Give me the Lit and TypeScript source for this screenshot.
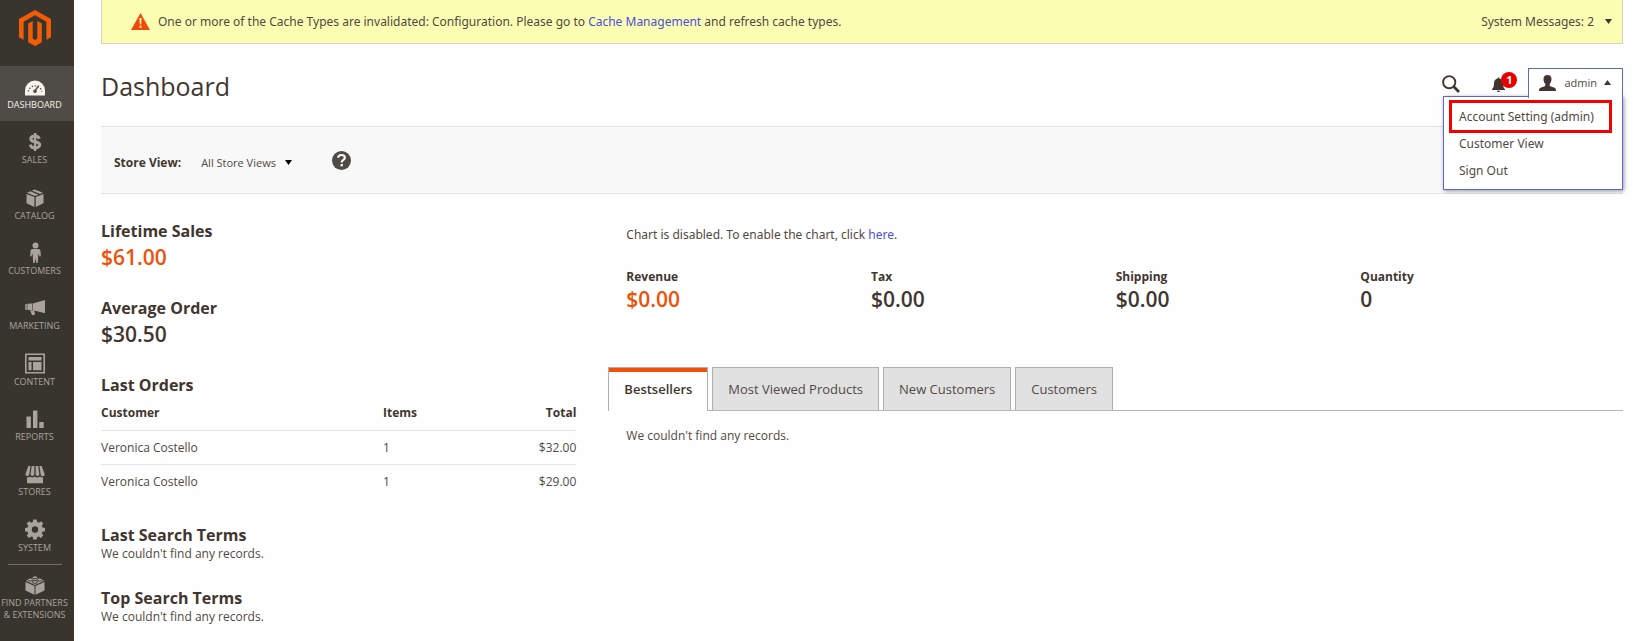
import { LitElement, html, css, svg } from "lit";
import { customElement, state } from "lit/decorators.js";
import { classMap } from "lit/directives/class-map.js";

const icons = {
  dashboard: svg`<path fill="currentColor" d="M0 18.500V13.500a10 10 0 0 1 20 0v5z"/><g stroke="#4f4b46" stroke-width="1.300" fill="none"><path stroke-dasharray="1.300 1.700" d="M3.300 14.500A6.800 6.800 0 0 1 16.700 14.500"/><path d="M13.700 8.600 9.800 14" stroke-width="1.500"/></g><circle cx="10" cy="14.200" r="1.800" fill="#4f4b46"/>`,
  sales: svg`<path fill="none" stroke="currentColor" stroke-width="3" d="M14.300 6.700C13.600 4.600 12 3.900 10 3.900 7.500 3.900 5.800 5.100 5.800 6.900c0 3.900 8.900 1.900 8.900 5.900 0 1.900-1.900 3.200-4.500 3.200-2.400 0-4.400-1-5-3.400"/><path fill="none" stroke="currentColor" stroke-width="2.400" d="M10.100 1v18"/>`,
  catalog: svg`<path fill="currentColor" d="M9.400 9v10L1.500 15.200V6zM10.700 9v10l7.800-3.800V6zM2 4.800l3.400-1.600 8 3.500-3.400 1.300zM6.900 2.500l2.600-1L18 4.800l-3 1.300z"/>`,
  customers: svg`<circle cx="10.500" cy="2.400" r="3" fill="currentColor"/><path fill="currentColor" d="M7.600 5.900h5.800c1.300 0 2 .8 2.100 2l.3 5.300-1.200.2-1.200-2.900-.6 9.600h-1.500l-.8-4.800-.8 4.800H8.200l-.6-9.600-1.200 2.900-1.200-.2.300-5.300c.1-1.200.8-2 2.100-2z"/>`,
  marketing: svg`<path fill="currentColor" d="M.3 6h1.500v6H.3zM2.400 5.800 7 5.500v6.800l-4.600-.5zM7.600 5.400 20 2v13.300L9.200 12.500l1 4-3 .8L5 12.500h2.600z"/>`,
  content: svg`<path fill="none" stroke="currentColor" stroke-width="1.600" d="M.8.300h18.400v18.400H.8z"/><path fill="currentColor" d="M3.500 3h13v3.500h-13zM3.500 8h3v8.200h-3zM8 8h8.500v8.200H8z"/>`,
  reports: svg`<path fill="currentColor" d="M1.500 7.500h4.400V19H1.500zM8 1.500h4.400V19H8zM14.300 13h4.400v6h-4.400z"/>`,
  stores: svg`<path fill="currentColor" d="M3.300 2h2.200L4.300 10.500a2 2 0 0 1-3.900-.3zM6.700 2h2.600v8.500a2 2 0 0 1-3.800 0zM10.600 2h2.600l1.200 8.500a2 2 0 0 1-3.800 0zM14.400 2h2.300l3 8.200a2 2 0 0 1-4 .3zM2 13.300c1.400.4 2.300 0 3-.8 1.300 1.200 3.200 1.200 4.900 0 1.800 1.200 3.700 1.200 5.100 0 .8.800 1.700 1.100 3 .8v6H2z"/>`,
  system: svg`<path fill="currentColor" fill-rule="evenodd" d="M8.300-.5h3.400l.5 2.600 1.600.7 2.200-1.500 2.300 2.300-1.500 2.200.7 1.600 2.500.5v3.300l-2.600.5-.6 1.600 1.500 2.200-2.400 2.400-2.100-1.500-1.600.7-.5 2.500H8.300l-.5-2.600-1.600-.6-2.200 1.500L1.700 15.600l1.500-2.200-.7-1.600-2.500-.5V7.900l2.600-.5.6-1.600L1.700 3.600 4.100 1.300l2.100 1.500 1.600-.7zM10 6.300a3.200 3.200 0 1 0 0 6.400 3.200 3.200 0 0 0 0-6.400z"/>`,
  partners: svg`<path fill="currentColor" d="M9.500 11v8.800L.5 15.500V7zM10.500 11v8.800l9-4.300V7zM.8 5.700 10 1.500l9.200 4.200L10 10z"/><g fill="currentColor" stroke="#38352f" stroke-width=".9"><ellipse cx="10" cy="2.300" rx="2.500" ry="1.500"/><ellipse cx="5.300" cy="4.600" rx="2.500" ry="1.500"/><ellipse cx="14.700" cy="4.600" rx="2.500" ry="1.500"/><ellipse cx="10" cy="6.900" rx="2.500" ry="1.500"/></g>`,
};

const menu: { key: keyof typeof icons; label: string }[] = [
  { key: "dashboard", label: "Dashboard" },
  { key: "sales", label: "Sales" },
  { key: "catalog", label: "Catalog" },
  { key: "customers", label: "Customers" },
  { key: "marketing", label: "Marketing" },
  { key: "content", label: "Content" },
  { key: "reports", label: "Reports" },
  { key: "stores", label: "Stores" },
  { key: "system", label: "System" },
];

const icon = (key: keyof typeof icons) =>
  html`<svg class="icon" viewBox="0 0 20 20" width="20" height="20" aria-hidden="true">${icons[key]}</svg>`;

@customElement("admin-sidebar")
export class AdminSidebar extends LitElement {
  static styles = css`
    :host { display: flex; flex-direction: column; background: #38352f; color: #a9a39b; }
    .logo { display: block; height: 66px; padding: 10px 0 0 19px; box-sizing: border-box; }
    .logo svg { display: block; }
    .menu { flex: 1; display: flex; flex-direction: column; margin: 0; padding: 0; list-style: none; }
    .entry { flex: 1; display: flex; }
    .link {
      flex: 1; display: flex; flex-direction: column; align-items: center; gap: 2px;
      padding: 11px 5px 0 0; color: inherit; text-decoration: none; text-transform: uppercase;
      font-size: 9px; line-height: 12px; text-align: center; white-space: nowrap;
    }
    .active { background: #4f4b46; color: #f7f3eb; }
    .icon { display: block; overflow: visible; }
    .partners { padding-bottom: 20px; display: flex; flex-direction: column; }
    .rule { width: 54px; height: 1px; margin: 0 0 0 8px; border: 0; background: #736d66; }
    .partners .link { padding-top: 10px; }
  `;

  render() {
    return html`
      <a class="logo" href="#" aria-label="Magento Admin">
        <svg width="32" height="36" viewBox="0 0 32 36" aria-hidden="true">
          <path fill="#f25c05" d="M16 0 32 9v18.200l-4.600 2.600V11.700L16 5.200 4.600 11.700v18.100L0 27.200V9z" />
          <path fill="#f25c05" d="M9.200 13.500l4.500-2.600v17.600L16 30l2.300-1.500V10.900l4.500 2.600v18.700L16 36l-6.800-3.800z" />
        </svg>
      </a>
      <ul class="menu">
        ${menu.map(
          (m, i) => html`<li class="entry">
            <a class=${classMap({ link: true, active: i === 0 })} href="#">${icon(m.key)}<span>${m.label}</span></a>
          </li>`
        )}
      </ul>
      <div class="partners">
        <hr class="rule" />
        <a class="link" href="#">${icon("partners")}<span>Find Partners<br />&amp; Extensions</span></a>
      </div>
    `;
  }
}

@customElement("app-root")
export class AppRoot extends LitElement {
  @state() private tab = 0;

  static styles = css`
    :host {
      display: grid; grid-template-columns: 74px minmax(0, 1fr); min-height: 100vh;
      background: #fefefe; color: #514943; font: 12px/18px "Open Sans", "Noto Sans", sans-serif;
    }
    a { color: #4a50dc; text-decoration: none; }
    h1, h2, p, dl, dd, ul { margin: 0; padding: 0; }
    button, select { font: inherit; color: inherit; background: none; border: 0; margin: 0; padding: 0; }
    svg { display: block; }
    .page { padding: 0 10px 0 27px; }

    .notice, .dropdown, .chart { font-family: "Noto Sans", "Open Sans", sans-serif; }
    .notice {
      display: flex; align-items: center; height: 44px; padding: 0 10px 0 29px; box-sizing: border-box;
      background: #fbfdb2; border: 1px solid #d3d3c6; border-top: 0;
    }
    .notice p { flex: 1; padding-left: 8px; }
    .messages { display: flex; align-items: center; gap: 11px; }

    .header { display: flex; justify-content: space-between; padding-top: 24px; height: 82px; box-sizing: border-box; }
    h1 { font-size: 25px; line-height: 37px; font-weight: 400; color: #41362f; }
    .tools { display: flex; align-items: flex-start; }
    .search { padding: 7px 32px 0 0; }
    .bell { position: relative; padding: 9px 23px 0 0; }
    .count {
      position: absolute; left: 9px; top: 4px; width: 16px; height: 16px; border-radius: 8px;
      background: #e60000; color: #fff; font-size: 11px; line-height: 16px; font-weight: 700; text-align: center;
    }
    .account { position: relative; }
    .user {
      position: relative; z-index: 2; display: flex; align-items: center; height: 30px; box-sizing: border-box;
      padding: 0 11px 2px 10px; font-size: 11px; background: #fff; border: 1px solid #5b67d8; border-bottom: 0;
    }
    .user span { padding: 0 7px 0 8px; }
    .dropdown {
      position: absolute; z-index: 1; top: 28px; right: 0; width: 180px; box-sizing: border-box; padding: 3px 10px 5px 5px;
      background: #fff; border: 1px solid #5b67d8; box-shadow: 1px 1px 4px rgba(0, 0, 0, 0.4);
      line-height: 17px; list-style: none;
    }
    .dropdown a { display: block; padding: 5px 10px; color: #514943; white-space: nowrap; }
    .dropdown .marked { margin-bottom: -3px; padding: 5px 7px; border: 3px solid #f50000; }

    .toolbar {
      display: flex; align-items: center; height: 68px; box-sizing: border-box; padding: 5px 13px 0;
      background: #f8f8f8; border: solid #e3e3e3; border-width: 1px 0;
    }
    .toolbar label { font-weight: 700; color: #41362f; padding-right: 20px; }
    .scope { display: flex; align-items: center; font-size: 11px; }
    .scope select { appearance: none; outline: 0; margin-right: -7px; padding-right: 16px; }
    .scope svg { pointer-events: none; }
    .help { margin: 0 0 4px 40px; }

    .body { display: grid; grid-template-columns: minmax(0, 1fr) minmax(0, 2fr); }
    .left { display: flex; flex-direction: column; gap: 26px; padding: 26px 32px 0 0; }
    h2 { font-size: 16px; line-height: 23px; font-weight: 700; color: #41362f; }
    .figure { font-size: 21px; line-height: 28px; font-weight: 600; color: #41362f; }
    table { width: 100%; border-collapse: collapse; line-height: 17px; }
    th, td { padding: 8px 0; text-align: left; }
    th { padding: 7px 0 9px; font-weight: 700; color: #41362f; }
    tbody tr { border-top: 1px solid #e5e5e5; }
    th:first-child { width: 282px; }
    th:last-child, td:last-child { text-align: right; }
    .none { line-height: 14px; }

    .right { padding-top: 32px; }
    .chart, .totals, .panel { padding: 0 18px; }
    .totals { display: grid; grid-template-columns: repeat(4, 1fr); padding-top: 24px; }
    .totals dt { font-weight: 700; color: #41362f; }
    .totals dd { font-size: 21px; line-height: 26px; font-weight: 600; color: #41362f; }
    .figure.accent, .totals .accent { color: #f05007; }
    .tabs { display: flex; gap: 4px; margin-top: 55px; border-bottom: 1px solid #b8b5b2; }
    .tab {
      height: 43px; padding: 0 15px; background: #e1e1e1; border: 1px solid #b0aeab; border-bottom: 0;
      box-sizing: border-box; font-size: 13px;
    }
    .tab.on {
      height: 44px; margin-bottom: -1px; padding-bottom: 1px; background: #fefefe; font-weight: 600; color: #41362f;
      box-shadow: inset 0 4px #f05007;
    }
    .panel { padding-top: 16px; }
  `;

  private caret(color: string, up = false) {
    return html`<svg width="7" height="5" viewBox="0 0 7 5" aria-hidden="true"><path fill=${color} d=${up ? "M3.500 0 7 5H0z" : "M0 0h7L3.500 5z"} /></svg>`;
  }

  render() {
    const totals = [["Revenue", "$0.00"], ["Tax", "$0.00"], ["Shipping", "$0.00"], ["Quantity", "0"]];
    const orders = [["Veronica Costello", "1", "$32.00"], ["Veronica Costello", "1", "$29.00"]];
    const tabs = ["Bestsellers", "Most Viewed Products", "New Customers", "Customers"];
    return html`
      <admin-sidebar></admin-sidebar>
      <main class="page">
        <div class="notice">
          <svg width="19" height="17" viewBox="0 0 19 17" aria-hidden="true">
            <path fill="#f04a06" d="M9.500 0 19 17H0z" />
            <path fill="#fbfdb2" d="M8.400 5h2.200l-.5 6.500H8.900zM8.500 12.700h2v2h-2z" />
          </svg>
          <p>One or more of the Cache Types are invalidated: Configuration. Please go to <a href="#">Cache Management</a> and refresh cache types.</p>
          <button class="messages">System Messages: 2 ${this.caret("#41362f")}</button>
        </div>

        <header class="header">
          <h1>Dashboard</h1>
          <div class="tools">
            <button class="search" aria-label="Search">
              <svg width="18" height="18" viewBox="0 0 18 18" aria-hidden="true" fill="none" stroke="#41362f">
                <circle cx="7.200" cy="7.200" r="6.100" stroke-width="1.900" />
                <path stroke-width="2.800" d="M11.600 11.600 17 17" />
              </svg>
            </button>
            <button class="bell" aria-label="Notifications">
              <svg width="13" height="15" viewBox="0 0 13 15" aria-hidden="true">
                <path fill="#41362f" d="M5.500 1.500a1 1 0 0 1 2 0C10 2 11 4 11 6.500c0 3 .7 4.500 2 5.700v.8H0v-.8c1.300-1.200 2-2.700 2-5.700C2 4 3 2 5.500 1.500zM4.700 13.700h3.600a1.800 1.300 0 0 1-3.600 0z" />
              </svg>
              <span class="count">1</span>
            </button>
            <div class="account">
              <button class="user" aria-expanded="true">
                <svg width="17" height="16" viewBox="0 0 17 16" aria-hidden="true">
                  <path fill="#41362f" d="M8.500 0c2.500 0 4 1.500 4 4 0 2.300-.8 3.800-1.800 4.800v1.500c0 .7.500.9 1.300 1.200l3.500 1.300c1.100.5 1.500 1.200 1.500 3.200H0c0-2 .4-2.700 1.500-3.200L5 11.500c.8-.3 1.300-.5 1.300-1.200V8.800C5.300 7.800 4.500 6.300 4.500 4c0-2.500 1.500-4 4-4z" />
                </svg>
                <span>admin</span>${this.caret("#41362f", true)}
              </button>
              <ul class="dropdown">
                <li><a class="marked" href="#">Account Setting (admin)</a></li>
                <li><a href="#">Customer View</a></li>
                <li><a href="#">Sign Out</a></li>
              </ul>
            </div>
          </div>
        </header>

        <div class="toolbar">
          <label for="scope">Store View:</label>
          <div class="scope">
            <select id="scope"><option>All Store Views</option></select>${this.caret("#000")}
          </div>
          <button class="help" aria-label="Help">
            <svg width="19" height="19" viewBox="0 0 19 19" aria-hidden="true">
              <circle cx="9.500" cy="9.500" r="9.500" fill="#514943" />
              <path fill="none" stroke="#f8f8f8" stroke-width="2.200" d="M6.100 6.800C6.200 4.900 7.600 4 9.500 4c2 0 3.400 1 3.400 2.700 0 2.300-3.200 2.100-3.200 4.700" />
              <path fill="#f8f8f8" d="M8.500 13h2.400v2.300H8.500z" />
            </svg>
          </button>
        </div>

        <div class="body">
          <div class="left">
            <section><h2>Lifetime Sales</h2><p class="figure accent">$61.00</p></section>
            <section><h2>Average Order</h2><p class="figure">$30.50</p></section>
            <section>
              <h2>Last Orders</h2>
              <table>
                <thead><tr><th>Customer</th><th>Items</th><th>Total</th></tr></thead>
                <tbody>${orders.map((o) => html`<tr>${o.map((c) => html`<td>${c}</td>`)}</tr>`)}</tbody>
              </table>
            </section>
            <section><h2>Last Search Terms</h2><p class="none">We couldn't find any records.</p></section>
            <section><h2>Top Search Terms</h2><p class="none">We couldn't find any records.</p></section>
          </div>
          <div class="right">
            <p class="chart">Chart is disabled. To enable the chart, click <a href="#">here</a>.</p>
            <dl class="totals">
              ${totals.map(([k, v], i) => html`<div><dt>${k}</dt><dd class=${classMap({ accent: i === 0 })}>${v}</dd></div>`)}
            </dl>
            <div class="tabs" role="tablist">
              ${tabs.map(
                (t, i) => html`<button role="tab" aria-selected=${i === this.tab} class=${classMap({ tab: true, on: i === this.tab })}
                  @click=${() => (this.tab = i)}>${t}</button>`
              )}
            </div>
            <p class="panel">We couldn't find any records.</p>
          </div>
        </div>
      </main>
    `;
  }
}
